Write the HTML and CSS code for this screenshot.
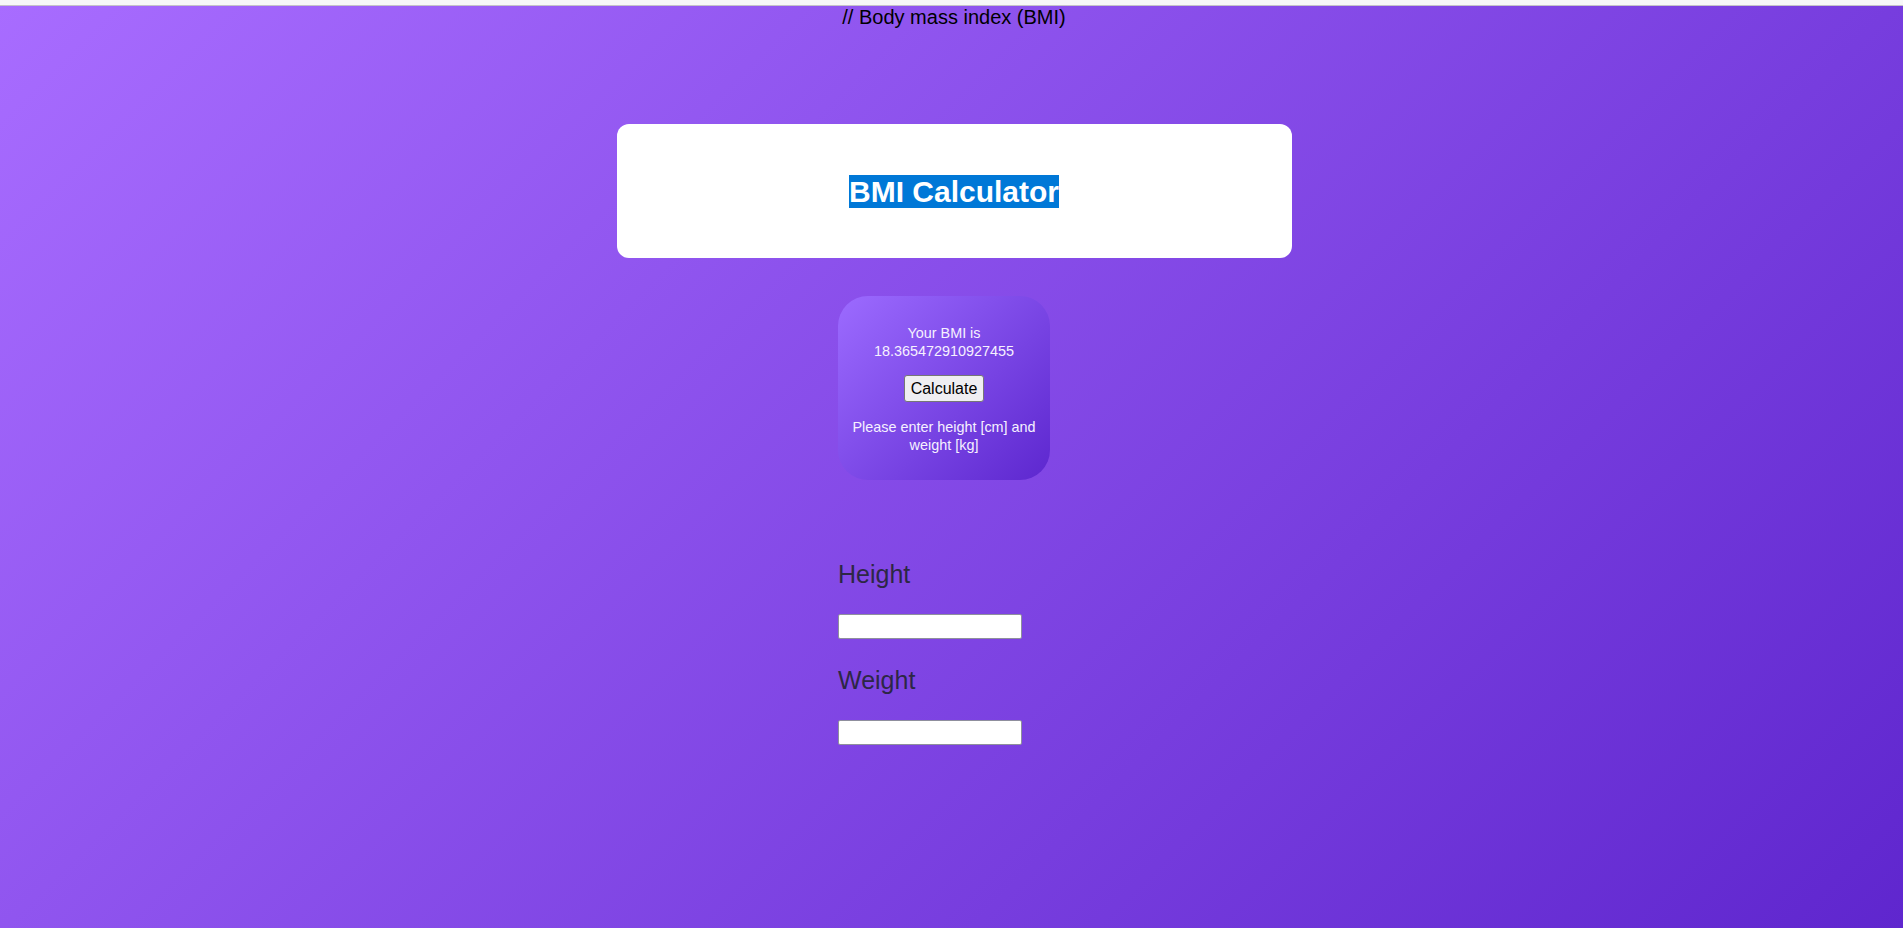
FILE: index.html
```html
<!DOCTYPE html>
<html lang="en">
<head>
<meta charset="utf-8">
<title>BMI Calculator</title>
<link rel="stylesheet" href="styles.css">
</head>
<body>
<div class="topbar"></div>
<div class="page">
  <div class="comment">// Body mass index (BMI)</div>
  <header class="card">
    <h1 class="title"><span class="sel">BMI Calculator</span></h1>
  </header>
  <main class="calc">
    <section class="result">
      <p class="line">Your BMI is 18.365472910927455</p>
      <button class="btn" type="button">Calculate</button>
      <p class="line">Please enter height [cm] and weight [kg]</p>
    </section>
    <form class="form">
      <h2 class="label first">Height</h2>
      <input class="field" type="text">
      <h2 class="label">Weight</h2>
      <input class="field" type="text">
    </form>
  </main>
</div>
</body>
</html>
```
FILE: styles.css
```css
html, body {
  margin: 0;
  padding: 0;
}
body {
  min-height: 100vh;
  font-family: "Liberation Sans", Arial, sans-serif;
  background: linear-gradient(135deg, #a86cff 0%, #5f26ce 100%);
  background-attachment: fixed;
}
.topbar {
  height: 5px;
  background: #f7f7f8;
  border-bottom: 1px solid #c4c2c9;
}
.page {
  padding-left: 5px;
}
.comment {
  font-size: 20px;
  line-height: 23px;
  text-align: center;
  color: #000;
}
.card {
  width: 675px;
  height: 134px;
  margin: 95px auto 0;
  background: #fff;
  border-radius: 12px;
  display: flex;
  align-items: center;
  justify-content: center;
}
.title {
  margin: 0;
  font-size: 30px;
  line-height: 33px;
  font-weight: bold;
  color: #fff;
}
.sel {
  background: #0078d7;
  color: #fff;
}
.calc {
  width: 232px;
  margin: 38px auto 0;
  display: flex;
  flex-direction: column;
  align-items: flex-start;
}
.result {
  width: 212px;
  box-sizing: border-box;
  padding: 28px 12px 26px;
  border-radius: 30px;
  background: linear-gradient(135deg, #9c6bff 0%, #5d27cf 100%);
  color: #f6f1ff;
  text-align: center;
  display: flex;
  flex-direction: column;
  align-items: center;
}
.line {
  margin: 0;
  font-size: 14.4px;
  line-height: 18px;
}
.btn {
  margin: 15px 0 16px;
  font-family: "Liberation Sans", Arial, sans-serif;
  font-size: 16px;
  line-height: 18px;
  padding: 4px 6px 3px;
  color: #000;
  background: #efeef2;
  border: 1px solid #767676;
  border-radius: 3px;
}
.form {
  display: flex;
  flex-direction: column;
  align-items: flex-start;
  margin: 0;
}
.label {
  margin: 27px 0 0;
  font-size: 25px;
  line-height: 29px;
  font-weight: normal;
  color: #2d2745;
}
.label.first {
  margin-top: 80px;
}
.field {
  margin: 25px 0 0;
  width: 184px;
  height: 25px;
  box-sizing: border-box;
  padding: 1px 2px;
  background: #fff;
  border: 1px solid #8f8f9d;
  border-radius: 2px;
}
```
